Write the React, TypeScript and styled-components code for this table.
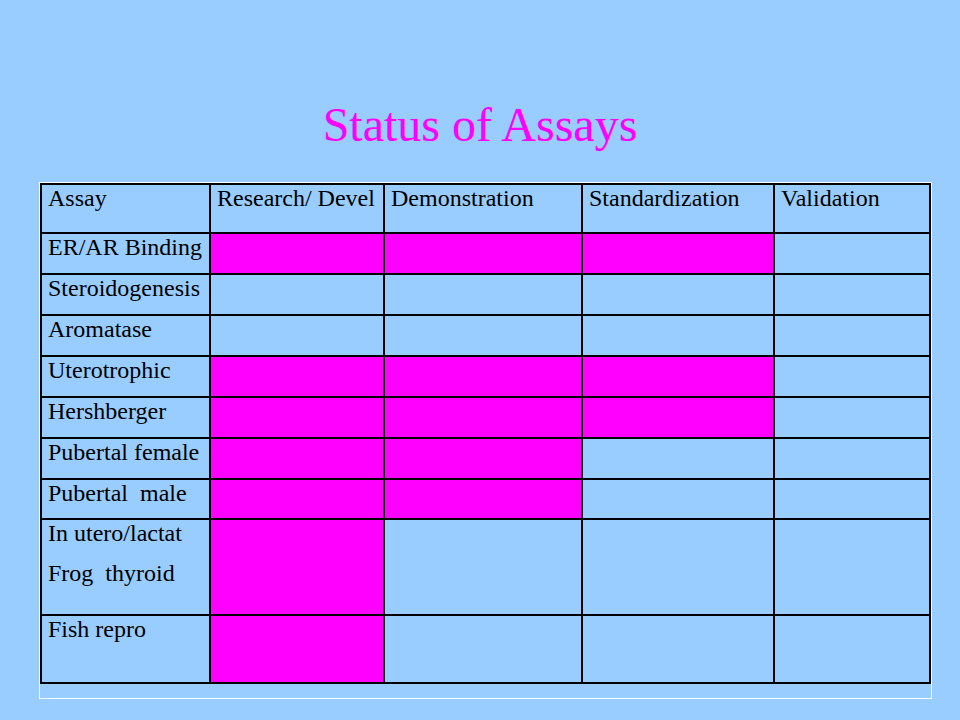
import React from "react";
import styled, { createGlobalStyle } from "styled-components";

const GlobalStyle = createGlobalStyle`
  html, body {
    margin: 0;
    padding: 0;
    background: #99ccff;
  }
  * { box-sizing: border-box; }
`;

const Slide = styled.div`
  width: 960px;
  height: 720px;
  background: #99ccff;
  padding-top: 101px;
  display: flex;
  flex-direction: column;
  font-family: "Liberation Serif", "Times New Roman", serif;
  overflow: hidden;
`;

const Title = styled.h1`
  margin: 0;
  font-family: "Liberation Serif", "Times New Roman", serif;
  font-size: 48px;
  line-height: 48px;
  font-weight: normal;
  color: #ff00ff;
  text-align: center;
`;

const Frame = styled.div`
  margin: 33px 0 0 39px;
  width: 893px;
  height: 517px;
  border: 1px solid #ffffff;
`;

const Grid = styled.div`
  display: grid;
  grid-template-columns: 169px 174px 198px 192px 156px;
  grid-template-rows: 49px repeat(6, 41px) 40px 96px 68px;
  border-top: 2px solid #000;
  border-left: 2px solid #000;
  width: 891px;
`;

const Cell = styled.div<{ $pink?: boolean }>`
  border-right: 2px solid #000;
  border-bottom: 2px solid #000;
  background: ${(p) => (p.$pink ? "#ff00ff" : "transparent")};
  padding: 0 0 0 6px;
  font-family: "Liberation Serif", "Times New Roman", serif;
  font-size: 24px;
  line-height: 27px;
  color: #000;
  white-space: pre;
`;

const Line = styled.div<{ $gap?: number }>`
  margin-top: ${(p) => p.$gap ?? 0}px;
`;

const headers = ["Assay", "Research/ Devel", "Demonstration", "Standardization", "Validation"];

type Row = { name: string[]; pink: number };

const rows: Row[] = [
  { name: ["ER/AR Binding"], pink: 3 },
  { name: ["Steroidogenesis"], pink: 0 },
  { name: ["Aromatase"], pink: 0 },
  { name: ["Uterotrophic"], pink: 3 },
  { name: ["Hershberger"], pink: 3 },
  { name: ["Pubertal female"], pink: 2 },
  { name: ["Pubertal  male"], pink: 2 },
  { name: ["In utero/lactat", "Frog  thyroid"], pink: 1 },
  { name: ["Fish repro"], pink: 1 },
];

export default function App() {
  return (
    <>
      <GlobalStyle />
      <Slide>
        <Title>Status of Assays</Title>
        <Frame>
          <Grid>
            {headers.map((h) => (
              <Cell key={h}>{h}</Cell>
            ))}
            {rows.map((r) => (
              <React.Fragment key={r.name[0]}>
                <Cell>
                  {r.name.map((n, i) => (
                    <Line key={n} $gap={i > 0 ? 13 : 0}>
                      {n}
                    </Line>
                  ))}
                </Cell>
                {[1, 2, 3, 4].map((c) => (
                  <Cell key={c} $pink={c <= r.pink} />
                ))}
              </React.Fragment>
            ))}
          </Grid>
        </Frame>
      </Slide>
    </>
  );
}
